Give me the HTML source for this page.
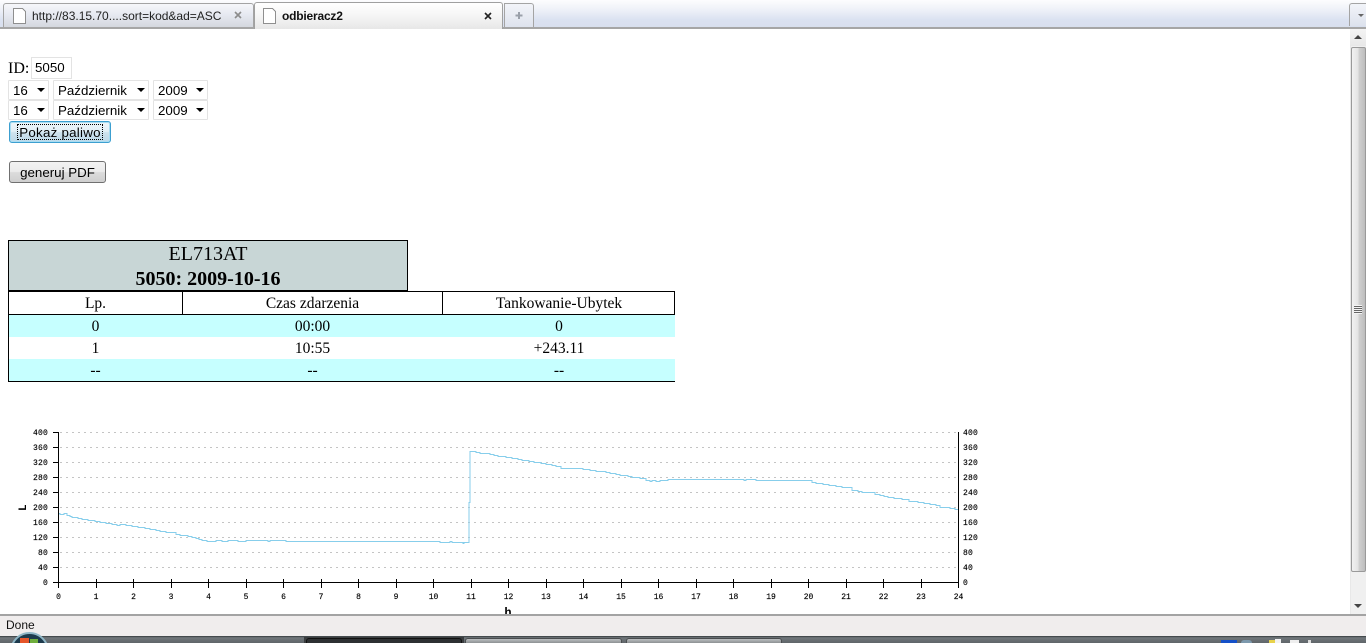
<!DOCTYPE html>
<html><head><meta charset="utf-8"><title>odbieracz2</title>
<style>
html,body{margin:0;padding:0;background:#fff;overflow:hidden}
#r{position:relative;width:1366px;height:643px;overflow:hidden;background:#fff;font-family:"Liberation Serif",serif;color:#000}
#r div{position:absolute;box-sizing:border-box}
.ui{font-family:"Liberation Sans",sans-serif}
.sel{height:20px;top:80px;border:1px solid #e3e3e3;background:#fff;font:13.33px/19.500px "Liberation Sans",sans-serif;padding-left:4px;padding-top:0;border-radius:1px}
.sel i{position:absolute;right:3px;top:7px;width:0;height:0;border:4px solid transparent;border-top:4px solid #000;border-bottom:0}
.btn{border:1px solid #707070;border-radius:3px;background:linear-gradient(#f2f2f2 0,#ebebeb 48%,#dcdcdc 52%,#cfcfcf 100%);font:13.33px/22px "Liberation Sans",sans-serif;text-align:center}
.c{text-align:center;font-size:15.500px;line-height:22px;height:22px;top:0}
.tb{top:638px;height:5px;border-radius:3px 3px 0 0}
</style></head><body><div id="r">

<!-- browser tab strip -->
<div style="left:0;top:0;width:1366px;height:28px;background:linear-gradient(#fdfdfe 0,#eef1f8 35%,#dbe2f1 70%,#d8dfee 100%)"></div>
<div style="left:3px;top:3px;width:251px;height:25px;border:1px solid #a4a4a4;border-bottom:0;border-radius:3px 3px 0 0;background:linear-gradient(#f6f7fa,#e6e9f1 45%,#d3d6dd)"></div>
<div style="left:254px;top:2px;width:249px;height:27px;border:1px solid #a0a0a0;border-bottom:0;border-radius:3px 3px 0 0;background:linear-gradient(#fff 0,#f6f6f6 45%,#e7e7e7 100%);z-index:2"></div>
<div style="left:504px;top:3px;width:30px;height:25px;border:1px solid #a4a4a4;border-bottom:0;border-radius:0 3px 0 0;background:linear-gradient(#f2f4f9,#dde2ed)"></div>
<div style="left:1349px;top:3px;width:17px;height:23px;border:1px solid #a4a4a4;border-right:0;border-bottom:0;border-radius:3px 0 0 0;background:linear-gradient(#f2f4f9,#dde2ed)"></div>
<div style="left:1358px;top:14px;width:0;height:0;border:3px solid transparent;border-top:3px solid #666;border-bottom:0"></div>
<div style="left:0;top:27px;width:1366px;height:2px;background:#a6a6a6;z-index:1"></div>

<svg style="position:absolute;left:0;top:0;z-index:3" width="540" height="28">
<g fill="#fff" stroke="#8f8f8f" shape-rendering="crispEdges">
<path d="M13.5 8.5H22.5L25.5 11.5V23.5H13.5Z"/>
<path d="M263.5 8.5H272.5L275.5 11.5V23.5H263.5Z"/>
</g>
<path d="M235 12L241 18M241 12L235 18" stroke="#8c8c8c" stroke-width="1.6" fill="none"/>
<path d="M485 13L491 19M491 13L485 19" stroke="#222" stroke-width="1.6" fill="none"/>
<path d="M519 12V19M515.500 15.500H522.500" stroke="#9aa0aa" stroke-width="2" fill="none"/>
<text x="32" y="20" font-family="Liberation Sans" font-size="12" fill="#222">http://83.15.70....sort=kod&amp;ad=ASC</text>
<text x="282" y="20" font-family="Liberation Sans" font-size="12" font-weight="bold" fill="#111" letter-spacing="-0.2">odbieracz2</text>
</svg>

<!-- form -->
<div style="left:8px;top:60px;font-size:16px;line-height:18px">ID:</div>
<div class="ui" style="left:31px;top:57px;width:41px;height:22px;border:1px solid #e3e3e3;font-size:13.33px;line-height:20px;padding-left:3px">5050</div>

<div class="sel" style="left:8px;width:41px">16<i></i></div>
<div class="sel" style="left:53px;width:96px">Październik<i></i></div>
<div class="sel" style="left:153px;width:55px">2009<i></i></div>
<div class="sel" style="left:8px;width:41px;top:100px">16<i></i></div>
<div class="sel" style="left:53px;width:96px;top:100px">Październik<i></i></div>
<div class="sel" style="left:153px;width:55px;top:100px">2009<i></i></div>

<div class="btn" style="left:9px;top:121px;width:102px;height:22px;border:1px solid #3c9fd0;box-shadow:inset 0 0 0 1px #a8dcf2;background:linear-gradient(#eef6fa,#e2eff6 48%,#cfe3ee 52%,#bcd8e8);letter-spacing:0.25px"><div style="left:7px;top:2px;width:86px;height:16px;border:1px dotted #000"></div>Pokaż paliwo</div>
<div class="btn" style="left:9px;top:161px;width:97px;height:22px">generuj PDF</div>

<!-- header box -->
<div style="left:8px;top:240px;width:400px;height:52px;background:#c8d6d6;border:1px solid #000;border-bottom:2px solid #000;text-align:center;font-size:20px;line-height:25px;padding-top:1px">EL713AT<br><b>5050: 2009-10-16</b></div>

<!-- table -->
<div style="left:8px;top:291px;width:667px;height:91px;border-left:1px solid #000;border-bottom:1px solid #000;background:#fff">
  <div style="left:0;top:0;width:666px;height:24px;border-top:1px solid #000;border-bottom:1px solid #000;border-right:1px solid #000"></div>
  <div style="left:173px;top:0;width:1px;height:24px;background:#000"></div>
  <div style="left:433px;top:0;width:1px;height:24px;background:#000"></div>
  <div style="left:0;top:24px;width:666px;height:22px;background:#c6ffff"></div>
  <div style="left:0;top:68px;width:666px;height:22px;background:#c6ffff"></div>
  <div class="c" style="left:0;width:173px;top:2px">Lp.</div>
  <div class="c" style="left:174px;width:259px;top:2px">Czas zdarzenia</div>
  <div class="c" style="left:434px;width:232px;top:2px">Tankowanie-Ubytek</div>
  <div class="c" style="left:0;width:173px;top:25px">0</div>
  <div class="c" style="left:174px;width:259px;top:25px">00:00</div>
  <div class="c" style="left:434px;width:232px;top:25px">0</div>
  <div class="c" style="left:0;width:173px;top:47px">1</div>
  <div class="c" style="left:174px;width:259px;top:47px">10:55</div>
  <div class="c" style="left:434px;width:232px;top:47px">+243.11</div>
  <div class="c" style="left:0;width:173px;top:69px">--</div>
  <div class="c" style="left:174px;width:259px;top:69px">--</div>
  <div class="c" style="left:434px;width:232px;top:69px">--</div>
</div>

<!-- chart -->
<svg style="position:absolute;left:0;top:420px" width="1000" height="194" viewBox="0 420 1000 194">
<g stroke="#c4c4c4" stroke-dasharray="2 4" shape-rendering="crispEdges">
<path d="M60 432.500H958M60 447.500H958M60 462.500H958M60 477.500H958M60 492.500H958M60 507.500H958M60 522.500H958M60 537.500H958M60 552.500H958M60 567.500H958"/>
</g>
<path fill="none" stroke="#87ceeb" shape-rendering="crispEdges" d="M58 513.500H60V514.500H64V513.500H67V515.500H70V516.500H72V517.500H78V518.500H82V519.500H88V520.500H95V521.500H100V522.500H106V523.500H112V524.500H117V525.500H120V524.500H126V525.500H132V526.500H138V527.500H145V528.500H150V529.500H156V530.500H160V531.500H166V532.500H176V534.500H180V535.500H188V536.500H192V537.500H196V538.500H199V539.500H202V540.500H207V541.500H216V540.500H222V541.500H228V540.500H238V541.500H246V540.500H268V541.500H270V540.500H286V541.500H440V542.500H450V541.500H452V542.500H463V543.500H464V542.500H469V502.500H470V451.500H476V452.500H480V453.500H490V454.500H494V455.500H498V456.500H506V457.500H512V458.500H518V459.500H522V460.500H529V461.500H534V462.500H541V463.500H546V464.500H552V465.500H556V466.500H561V468.500H583V469.500H590V470.500H596V471.500H606V472.500H610V473.500H616V474.500H620V475.500H628V476.500H632V477.500H640V478.500H646V480.500H650V481.500H652V480.500H656V481.500H660V480.500H668V479.500H744V480.500H746V479.500H756V480.500H812V482.500H816V483.500H823V484.500H829V485.500H836V486.500H842V487.500H852V490.500H858V491.500H862V492.500H875V494.500H880V495.500H884V496.500H888V497.500H894V498.500H902V499.500H909V501.500H918V502.500H924V503.500H930V504.500H936V505.500H940V507.500H950V508.500H955V509.500H958"/>
<g stroke="#000" fill="none" shape-rendering="crispEdges">
<path d="M58.500 432V588M958.500 432V588M53 582.500H959"/>
<path d="M53 432.500H58M53 447.500H58M53 462.500H58M53 477.500H58M53 492.500H58M53 507.500H58M53 522.500H58M53 537.500H58M53 552.500H58M53 567.500H58"/>
<path d="M96.500 579V588M133.500 579V588M171.500 579V588M208.500 579V588M246.500 579V588M283.500 579V588M321.500 579V588M358.500 579V588M396.500 579V588M433.500 579V588M471.500 579V588M508.500 579V588M546.500 579V588M583.500 579V588M621.500 579V588M658.500 579V588M696.500 579V588M733.500 579V588M771.500 579V588M808.500 579V588M846.500 579V588M883.500 579V588M921.500 579V588"/>
</g>
<g font-family="Liberation Mono" font-size="8" fill="#000" stroke="#000" stroke-width="0.15" text-anchor="end" letter-spacing="0.2">
<text x="48" y="435">400</text><text x="48" y="450">360</text><text x="48" y="465">320</text><text x="48" y="480">280</text><text x="48" y="495">240</text><text x="48" y="510">200</text><text x="48" y="525">160</text><text x="48" y="540">120</text><text x="48" y="555">80</text><text x="48" y="570">40</text><text x="48" y="585">0</text>
</g>
<g font-family="Liberation Mono" font-size="8" fill="#000" stroke="#000" stroke-width="0.15" letter-spacing="0.2">
<text x="963" y="435">400</text><text x="963" y="450">360</text><text x="963" y="465">320</text><text x="963" y="480">280</text><text x="963" y="495">240</text><text x="963" y="510">200</text><text x="963" y="525">160</text><text x="963" y="540">120</text><text x="963" y="555">80</text><text x="963" y="570">40</text><text x="963" y="585">0</text>
</g>
<g font-family="Liberation Mono" font-size="8" fill="#000" stroke="#000" stroke-width="0.15" text-anchor="middle">
<text x="58.500" y="599">0</text><text x="96" y="599">1</text><text x="133.500" y="599">2</text><text x="171" y="599">3</text><text x="208.500" y="599">4</text><text x="246" y="599">5</text><text x="283.500" y="599">6</text><text x="321" y="599">7</text><text x="358.500" y="599">8</text><text x="396" y="599">9</text><text x="433.500" y="599">10</text><text x="471" y="599">11</text><text x="508.500" y="599">12</text><text x="546" y="599">13</text><text x="583.500" y="599">14</text><text x="621" y="599">15</text><text x="658.500" y="599">16</text><text x="696" y="599">17</text><text x="733.500" y="599">18</text><text x="771" y="599">19</text><text x="808.500" y="599">20</text><text x="846" y="599">21</text><text x="883.500" y="599">22</text><text x="921" y="599">23</text><text x="958.500" y="599">24</text>
</g>
<text x="508" y="616" font-family="Liberation Mono" font-size="12" font-weight="bold" text-anchor="middle">h</text>
<text transform="translate(26 511) rotate(-90)" font-family="Liberation Mono" font-size="11" font-weight="bold">L</text>
</svg>

<!-- scrollbar -->
<div style="left:1350px;top:29px;width:16px;height:585px;background:#f0f0f0;border-left:1px solid #e8e8e8"></div>
<div style="left:1350px;top:29px;width:16px;height:17px;background:linear-gradient(#f4f4f4,#e8e8e8)"></div>
<div style="left:1354px;top:35px;width:0;height:0;border:4px solid transparent;border-bottom:4px solid #444;border-top:0"></div>
<div style="left:1351px;top:47px;width:15px;height:525px;border:1px solid #9a9a9a;border-radius:2px;background:linear-gradient(90deg,#f2f2f2,#e4e4e4 45%,#cfcfcf 55%,#bdbdbd)"></div>
<div style="left:1354px;top:305px;width:8px;height:9px;background:repeating-linear-gradient(#f4f4f4 0,#f4f4f4 1px,#666 1px,#666 2px)"></div>
<div style="left:1354px;top:604px;width:0;height:0;border:4px solid transparent;border-top:4px solid #444;border-bottom:0"></div>

<!-- status bar -->
<div style="left:0;top:614px;width:1366px;height:22px;background:#f0eded;border-top:2px solid #a3a3a3"></div>
<div style="left:6px;top:618px;font:12px/14px 'Liberation Sans',sans-serif;color:#111">Done</div>

<!-- taskbar -->
<div style="left:0;top:636px;width:1366px;height:7px;background:linear-gradient(#33383b 0,#70767a 25%,#5f6569 100%)"></div>
<div style="left:304px;top:637px;width:160px;height:6px;background:#3a3d3f"></div>
<div class="tb" style="left:306px;width:156px;background:#2d3032;border:1px solid #111;border-bottom:0"></div>
<div class="tb" style="left:465px;width:157px;background:linear-gradient(#bcbfc1,#8d9193);border:1px solid #4a4d4f;border-bottom:0"></div>
<div class="tb" style="left:626px;width:156px;background:linear-gradient(#bcbfc1,#8d9193);border:1px solid #4a4d4f;border-bottom:0"></div>
<div style="left:10px;top:632px;width:39px;height:39px;border-radius:50%;background:#1d3a4c;border:2px solid #8fb6c6"></div>
<div style="left:20px;top:638px;width:9px;height:6px;background:#e5552a"></div>
<div style="left:30px;top:639px;width:8px;height:5px;background:#6fae3c"></div>
<div style="left:1221px;top:640px;width:16px;height:3px;background:#1450c8"></div>
<div style="left:1241px;top:640px;width:11px;height:3px;background:#7d99ad;border-radius:5px 5px 0 0"></div>
<div style="left:1269px;top:640px;width:6px;height:3px;background:#e8d24a"></div>
<div style="left:1275px;top:639px;width:6px;height:4px;background:#f2f2f2"></div>
<div style="left:1290px;top:640px;width:9px;height:3px;background:#eee"></div>
<div style="left:1308px;top:640px;width:3px;height:3px;background:#ddd"></div>
</div></body></html>
